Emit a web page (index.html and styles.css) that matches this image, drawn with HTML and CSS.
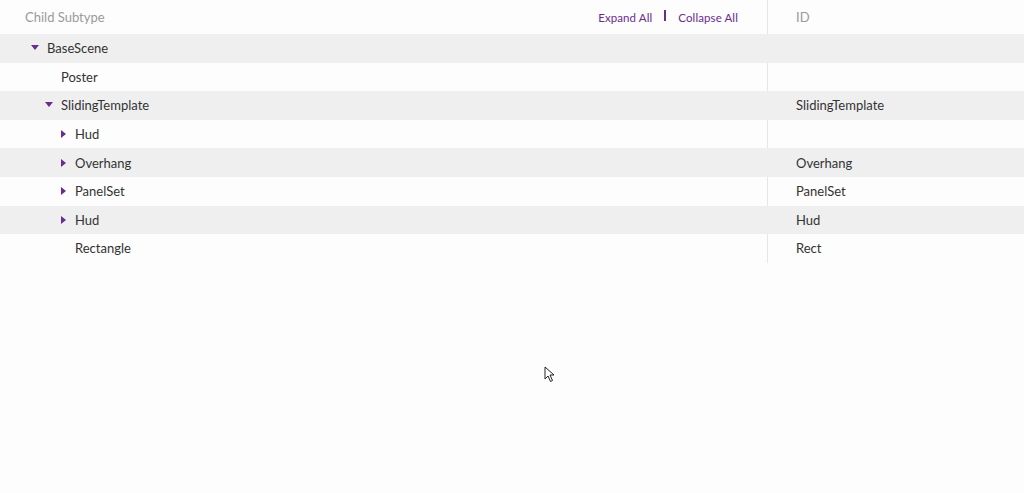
FILE: index.html
```html
<!DOCTYPE html>
<html lang="en">

<head>
    <meta charset="UTF-8">
    <meta name="viewport" content="width=device-width, initial-scale=1.0">
    <title>Child Subtype</title>
    <link rel="stylesheet" href="styles.css">
</head>

<body>
    <div class="table">
        <div class="row head">
            <div class="cell name">
                <span class="title">Child Subtype</span>
                <span class="actions">
                    <a href="javascript:;">Expand All</a>
                    <span class="sep"></span>
                    <a href="javascript:;">Collapse All</a>
                </span>
            </div>
            <div class="cell id title">ID</div>
        </div>
        <div class="row band">
            <div class="cell name lv0"><span class="caret down"></span>BaseScene</div>
            <div class="cell id"></div>
        </div>
        <div class="row">
            <div class="cell name lv1"><span class="caret none"></span>Poster</div>
            <div class="cell id"></div>
        </div>
        <div class="row band">
            <div class="cell name lv1"><span class="caret down"></span>SlidingTemplate</div>
            <div class="cell id">SlidingTemplate</div>
        </div>
        <div class="row">
            <div class="cell name lv2"><span class="caret right"></span>Hud</div>
            <div class="cell id"></div>
        </div>
        <div class="row band">
            <div class="cell name lv2"><span class="caret right"></span>Overhang</div>
            <div class="cell id">Overhang</div>
        </div>
        <div class="row">
            <div class="cell name lv2"><span class="caret right"></span>PanelSet</div>
            <div class="cell id">PanelSet</div>
        </div>
        <div class="row band">
            <div class="cell name lv2"><span class="caret right"></span>Hud</div>
            <div class="cell id">Hud</div>
        </div>
        <div class="row">
            <div class="cell name lv2"><span class="caret none"></span>Rectangle</div>
            <div class="cell id">Rect</div>
        </div>
    </div>
    <!-- mouse pointer captured in the shot -->
    <svg class="pointer" width="12" height="18" viewBox="0 0 12 18">
        <path d="M1 1 L1 13 L4 10 L6.5 15.5 L8.5 14.5 L6 9 L10 9 Z" fill="#fff" stroke="#222" stroke-width="1"/>
    </svg>
</body>

</html>
```

FILE: styles.css
```css
* {
    margin: 0;
    padding: 0;
    box-sizing: border-box;
}

body {
    background-color: #fdfdfd;
    font-family: "Lato", "Open Sans", sans-serif;
    font-size: 13px;
    color: #333;
    height: 493px;
    position: relative;
}

.table {
    width: 100%;
}

.row {
    display: flex;
    height: 28.6px;
    align-items: stretch;
}

.row.head {
    height: 34px;
}

.band {
    background-color: #efeff0;
}

.cell {
    display: flex;
    align-items: center;
}

.name {
    width: 768px;
    border-right: 1px solid #e6e6e6;
}

.band .name {
    border-right-color: transparent;
}

.id {
    flex: 1;
    padding-left: 28px;
}

.head .name {
    padding-left: 25px;
    padding-right: 29px;
    justify-content: space-between;
}

.title {
    color: #9a9a9a;
}

.actions {
    display: flex;
    align-items: center;
    gap: 12px;
}

.actions a {
    color: #6a2c8f;
    text-decoration: none;
    font-size: 11.5px;
    letter-spacing: 0.1px;
}

.sep {
    width: 2px;
    height: 11px;
    background-color: #6a2c8f;
    margin-top: -3px;
}

.lv0 {
    padding-left: 31px;
}

.lv1 {
    padding-left: 45px;
}

.lv2 {
    padding-left: 61px;
}

.caret {
    display: inline-block;
    width: 16px;
    height: 8px;
    position: relative;
}

.caret.down::before {
    content: "";
    position: absolute;
    left: 0;
    top: 1px;
    border-left: 4.5px solid transparent;
    border-right: 4.5px solid transparent;
    border-top: 5px solid #6a2c8f;
}

.caret.right {
    width: 14px;
}

.caret.right::before {
    content: "";
    position: absolute;
    left: 0;
    top: 0;
    border-top: 4.5px solid transparent;
    border-bottom: 4.5px solid transparent;
    border-left: 5px solid #6a2c8f;
}

.lv1 .caret.none {
    width: 16px;
}

.lv2 .caret.none {
    width: 14px;
}

.pointer {
    position: absolute;
    left: 544px;
    top: 366px;
}
```
